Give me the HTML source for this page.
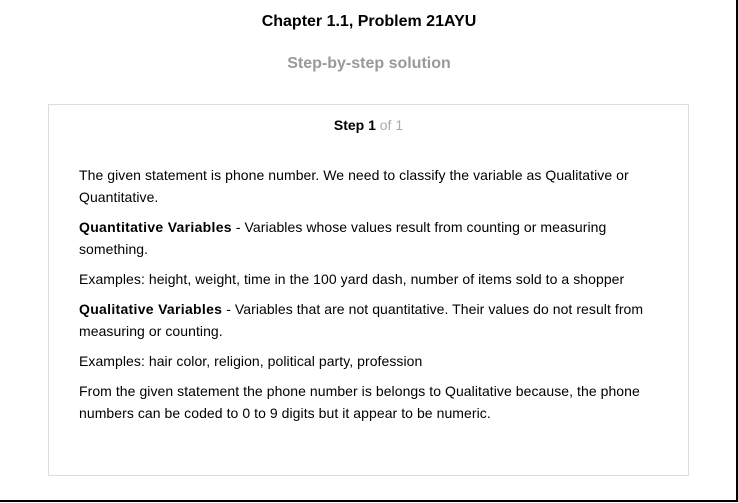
<!DOCTYPE html>
<html><head><meta charset="utf-8"><style>
html,body{margin:0;padding:0;background:#fff;}
body{width:738px;height:503px;position:relative;overflow:hidden;font-family:"Liberation Sans",Arial,sans-serif;color:#000;}
.frame{position:absolute;left:0;top:0;width:736px;height:500px;border-right:2px solid #000;border-bottom:2px solid #000;}
.t{position:absolute;left:0;width:738px;text-align:center;font-weight:bold;font-size:16px;}
.box{position:absolute;left:48px;top:104px;width:639px;height:370px;border:1px solid #ddd;}
.step{position:absolute;top:12px;left:0;width:100%;text-align:center;font-size:14px;}
.c{position:absolute;left:30px;top:59px;width:580px;font-size:14px;line-height:22px;letter-spacing:0.06px;}
.c p{margin:0 0 8px 0;}
.c b{letter-spacing:0.3px;}
</style></head><body>
<div class="frame"></div>
<div class="t" style="top:13px">Chapter 1.1, Problem 21AYU</div>
<div class="t" style="top:55px;color:#999">Step-by-step solution</div>
<div class="box">
<div class="step"><b>Step 1</b> <span style="color:#aaa">of 1</span></div>
<div class="c">
<p>The given statement is phone number. We need to classify the variable as Qualitative or Quantitative.</p>
<p><b>Quantitative Variables</b> - Variables whose values result from counting or measuring something.</p>
<p>Examples: height, weight, time in the 100 yard dash, number of items sold to a shopper</p>
<p><b>Qualitative Variables</b> - Variables that are not quantitative. Their values do not result from measuring or counting.</p>
<p>Examples: hair color, religion, political party, profession</p>
<p>From the given statement the phone number is belongs to Qualitative because, the phone numbers can be coded to 0 to 9 digits but it appear to be numeric.</p>
</div>
</div>
</body></html>
